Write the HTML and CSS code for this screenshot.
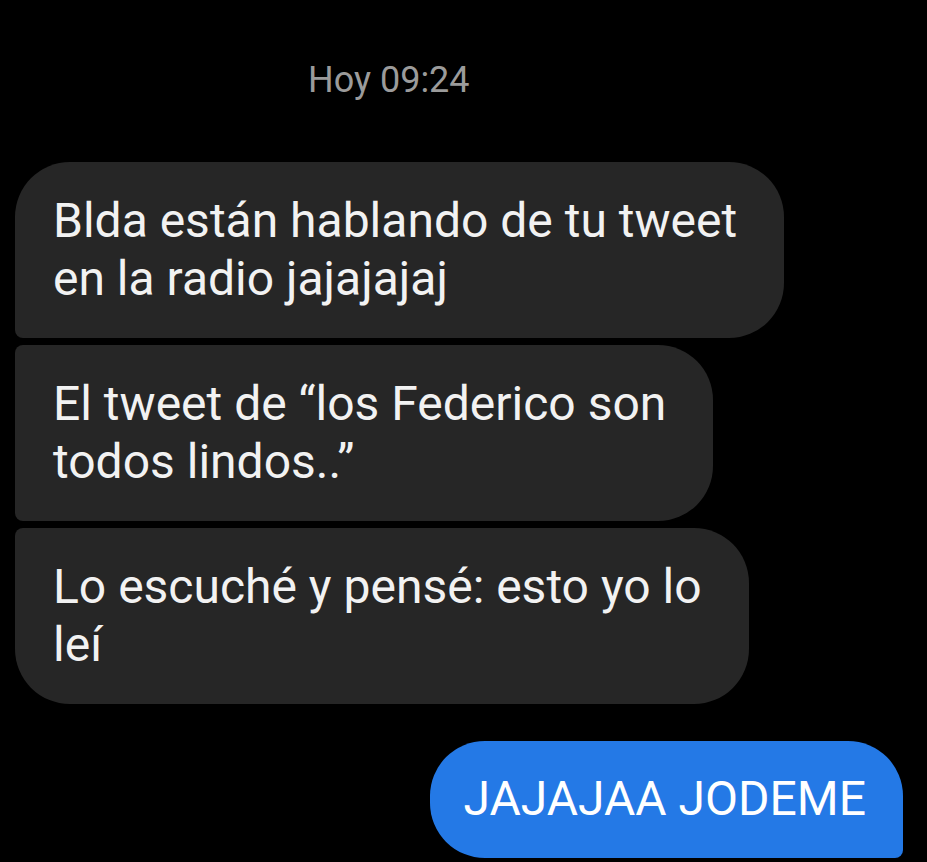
FILE: index.html
```html
<!DOCTYPE html>
<html lang="es">
<head>
<meta charset="utf-8">
<link rel="stylesheet" href="styles.css">
</head>
<body>
<div class="chat">
  <div class="stamp">Hoy 09:24</div>
  <div class="group">
    <div class="bubble in first">Blda están hablando de tu tweet<br>en la radio jajajajaj</div>
    <div class="bubble in mid">El tweet de “los Federico son<br>todos lindos..”</div>
    <div class="bubble in last">Lo escuché y pensé: esto yo lo<br>leí</div>
  </div>
  <div class="bubble out">JAJAJAA JODEME</div>
</div>
</body>
</html>
```
FILE: styles.css
```css
html, body {
  margin: 0;
  padding: 0;
  background: #000;
}
.chat {
  width: 927px;
  height: 862px;
  overflow: hidden;
  display: flex;
  flex-direction: column;
  padding: 58px 24px 0 15px;
  box-sizing: border-box;
  font-family: Roboto, "Noto Sans", sans-serif;
}
.stamp {
  align-self: flex-start;
  margin-left: 293px;
  color: #9b9b9b;
  font-size: 36px;
  line-height: 44px;
  margin-bottom: 60px;
}
.group {
  display: flex;
  flex-direction: column;
  align-items: flex-start;
  gap: 7px;
}
.bubble {
  font-size: 48px;
  line-height: 58px;
  color: #f2f2f2;
  white-space: nowrap;
}
.in {
  background: #262626;
  padding: 30px 47px 30px 38px;
}
.first { border-radius: 55px 55px 55px 8px; }
.mid { border-radius: 8px 55px 55px 8px; }
.last { border-radius: 8px 55px 55px 55px; }
.out {
  align-self: flex-end;
  margin-top: 37px;
  background: #2479e6;
  color: #fff;
  padding: 29px 37px 30px 33px;
  border-radius: 55px 55px 8px 55px;
}
```
